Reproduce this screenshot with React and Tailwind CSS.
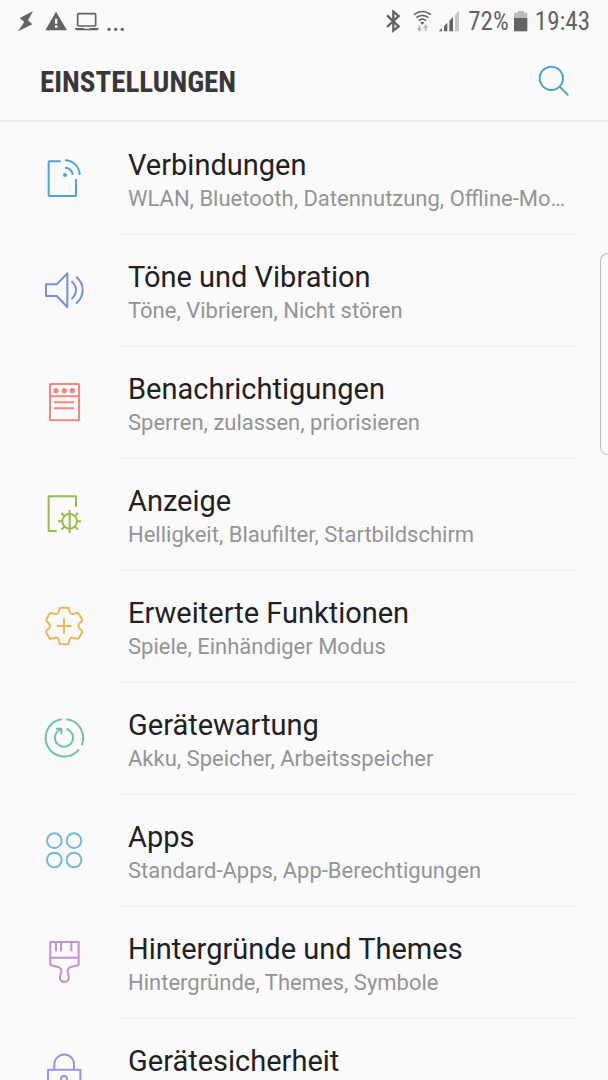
import React from 'react';

const iconProps = {
  className: 'size-11 shrink-0',
  fill: 'none',
  stroke: 'currentColor',
  strokeWidth: 6,
  strokeLinejoin: 'round',
  strokeLinecap: 'butt',
  'aria-hidden': true,
};

function ConnectionsIcon() {
  return (
    <svg {...iconProps} viewBox="36 33 132 132">
      <path d="M92 46H58Q56 46 56 48V148Q56 150 58 150H136Q138 150 138 148V99" />
      <path d="M105 43A44 44 0 0 1 149 87M105 65A23 23 0 0 1 128 87" />
      <circle cx="105" cy="87" r="6" fill="currentColor" stroke="none" />
    </svg>
  );
}

function SoundIcon() {
  return (
    <svg {...iconProps} viewBox="36 40 132 132">
      <path d="M48 86H80L112 53V154L80 121H48Z" />
      <path strokeLinecap="round" d="M126 78Q138 90 138 103Q138 117 126 129M140 65Q158 81 158 103Q158 126 140 142" />
    </svg>
  );
}

function NotificationsIcon() {
  return (
    <svg {...iconProps} viewBox="36 40 132 132">
      <rect x="60" y="49" width="87" height="109" rx="2" />
      <path d="M60 86H147M72 104H132M72 122H132" />
      <g fill="currentColor" stroke="none">
        <circle cx="78" cy="69" r="8" />
        <circle cx="103" cy="69" r="8" />
        <circle cx="127" cy="69" r="8" />
      </g>
    </svg>
  );
}

function DisplayIcon() {
  return (
    <svg {...iconProps} viewBox="36 38 132 132">
      <path d="M80 152H56V48H138V79" />
      <circle cx="119" cy="123" r="22" />
      <path d="M119 89V158M84 123H97M141 123H153M94 98L104 108M144 98L134 108M94 148L104 138M144 148L134 138" />
    </svg>
  );
}

function AdvancedIcon() {
  return (
    <svg {...iconProps} viewBox="36 39 132 132">
      <path d="M90 47H115L119 60Q121 67 128 66L142 63Q145 63 147 66L156 82Q157 85 155 87L147 96Q143 102 147 108L155 116Q157 119 156 121L147 138Q145 141 142 140L128 137Q121 136 119 143L115 157H90L86 143Q84 136 77 137L63 140Q60 141 58 138L49 121Q48 119 50 116L58 108Q62 102 58 96L50 87Q48 85 49 82L58 66Q60 63 63 63L77 66Q84 67 86 60Z" />
      <path d="M80 102H125M102 79V125" />
    </svg>
  );
}

function MaintenanceIcon() {
  return (
    <svg {...iconProps} viewBox="36 40 132 132">
      <path d="M96 47A56 56 0 1 0 147 137M109 47A56 56 0 0 1 155 125" />
      <path d="M92 77A27 27 0 1 0 109 76M78 75H94V91" />
    </svg>
  );
}

function AppsIcon() {
  return (
    <svg {...iconProps} viewBox="36 40 132 132">
      <circle cx="73" cy="75" r="22" />
      <circle cx="132" cy="75" r="22" />
      <circle cx="73" cy="133" r="22" />
      <circle cx="132" cy="133" r="22" />
    </svg>
  );
}

function ThemesIcon() {
  return (
    <svg {...iconProps} viewBox="36 41 132 132">
      <path d="M61 44H146V113L120 120Q111 124 113 134L116 147Q118 163 103 164Q88 163 90 147L94 134Q96 124 87 120L61 113ZM61 91H146M78 44V72M93 44V72M124 44V72" />
    </svg>
  );
}

function SecurityIcon() {
  return (
    <svg {...iconProps} viewBox="36 378 132 132">
      <path d="M73 427V412A29 29 0 0 1 132 412V427M54 428H151V505H54Z" />
      <circle cx="102" cy="456" r="9" />
    </svg>
  );
}

const settings = [
  { title: 'Verbindungen', detail: 'WLAN, Bluetooth, Datennutzung, Offline-Modus', Icon: ConnectionsIcon, color: 'text-[#4ca4d0]' },
  { title: 'Töne und Vibration', detail: 'Töne, Vibrieren, Nicht stören', Icon: SoundIcon, color: 'text-[#738fe0]' },
  { title: 'Benachrichtigungen', detail: 'Sperren, zulassen, priorisieren', Icon: NotificationsIcon, color: 'text-[#f2897e]' },
  { title: 'Anzeige', detail: 'Helligkeit, Blaufilter, Startbildschirm', Icon: DisplayIcon, color: 'text-[#98bb4c]' },
  { title: 'Erweiterte Funktionen', detail: 'Spiele, Einhändiger Modus', Icon: AdvancedIcon, color: 'text-[#ecb855]' },
  { title: 'Gerätewartung', detail: 'Akku, Speicher, Arbeitsspeicher', Icon: MaintenanceIcon, color: 'text-[#72c1ae]' },
  { title: 'Apps', detail: 'Standard-Apps, App-Berechtigungen', Icon: AppsIcon, color: 'text-[#72b9df]' },
  { title: 'Hintergründe und Themes', detail: 'Hintergründe, Themes, Symbole', Icon: ThemesIcon, color: 'text-[#c292d3]' },
  { title: 'Gerätesicherheit', Icon: SecurityIcon, color: 'text-[#a08fe3]' },
];

function StatusBar() {
  return (
    <div className="flex h-11 items-center justify-between pr-[18px] pl-4 text-[#636363]">
      <svg className="h-11 w-28" viewBox="48 -3 336 132" fill="currentColor" aria-hidden="true">
        <path d="M99 31L59 51L73 63L54 91L97 70L84 58Z" />
        <path fillRule="evenodd" d="M168 32L201 88H136ZM165 53V68H172V53ZM165 73V80H172V73Z" />
        <rect x="233" y="38" width="54" height="37" rx="3" fill="none" stroke="currentColor" strokeWidth="5" />
        <path d="M225 81H251L254 83H268L271 81H296V84L292 88H229L225 84Z" />
        <circle cx="327" cy="85" r="5" />
        <circle cx="347" cy="85" r="5" />
        <circle cx="367" cy="85" r="5" />
      </svg>
      <div className="flex items-center">
        <svg className="mr-[3px] h-11 w-20" viewBox="45 -3 240 132" fill="none" stroke="currentColor" aria-hidden="true">
          <path strokeWidth="7" d="M51 43L86 76L70 89V32L86 45L51 78" />
          <path strokeWidth="5" d="M132 41Q157 22 183 41M139 50Q157 36 175 50M146 59Q157 50 168 59" />
          <path fill="currentColor" stroke="none" d="M151 65Q157 60 163 65L157 71Z" />
          <path stroke="#b5b5b5" strokeWidth="5" d="M148 73V86M167 90V76" />
          <path fill="#b5b5b5" stroke="none" d="M140 82H156L148 92ZM159 80H175L167 70Z" />
          <g fill="currentColor" stroke="none">
            <path d="M206 91L216 81V91ZM222 75L232 65V91H222ZM238 59L249 48V91H238Z" />
            <path fill="#c6c6c6" d="M255 42L267 29V91H255Z" />
          </g>
        </svg>
        <span className="text-[25px] leading-8">72%</span>
        <svg className="mr-[5px] ml-[3px] h-11 w-[18px]" viewBox="426 -3 54 132" fill="currentColor" aria-hidden="true">
          <path fill="#bcbcbc" d="M432 35H443V30H462V35H472V51H432Z" />
          <path d="M432 51H472V91H432Z" />
        </svg>
        <span className="text-[25px] leading-8">19:43</span>
      </div>
    </div>
  );
}

export default function App() {
  return (
    <div className="relative h-screen overflow-hidden bg-[#fafafa] font-['Roboto',sans-serif]">
      <div className="font-['Roboto_Condensed','Roboto',sans-serif]">
        <StatusBar />
        <header className="flex h-[78px] items-center justify-between border-b-2 border-[#ebebeb] pr-9 pl-10">
          <h1 className="text-[29px] leading-8 font-bold text-[#383838]">EINSTELLUNGEN</h1>
          <button type="button" aria-label="Suchen" className="text-[#4ba2d0]">
            <svg className="size-9" viewBox="498 192 108 108" fill="none" stroke="currentColor" strokeWidth="6" aria-hidden="true">
              <circle cx="544" cy="235" r="35" />
              <path d="M569 260L595 286" />
            </svg>
          </button>
        </header>
      </div>
      <ul className="pt-px">
        {settings.map(({ title, detail, Icon, color }) => (
          <li key={title}>
            <a href="#" className="flex h-28 gap-[34px] pr-8 pl-[42px]">
              <span className={`flex items-center ${color}`}>
                <Icon />
              </span>
              <span className="flex min-w-0 flex-1 flex-col border-b border-[#eeeeee] pt-6 pr-2 pl-2">
                <span className="truncate text-[29px] leading-9 text-[#212121]">{title}</span>
                {detail && <span className="truncate text-[22px] leading-8 text-[#949494]">{detail}</span>}
              </span>
            </a>
          </li>
        ))}
      </ul>
      <div className="absolute top-[253px] right-0 h-[202px] w-2 rounded-l-lg border border-r-0 border-[#bdbdbd]" />
    </div>
  );
}
